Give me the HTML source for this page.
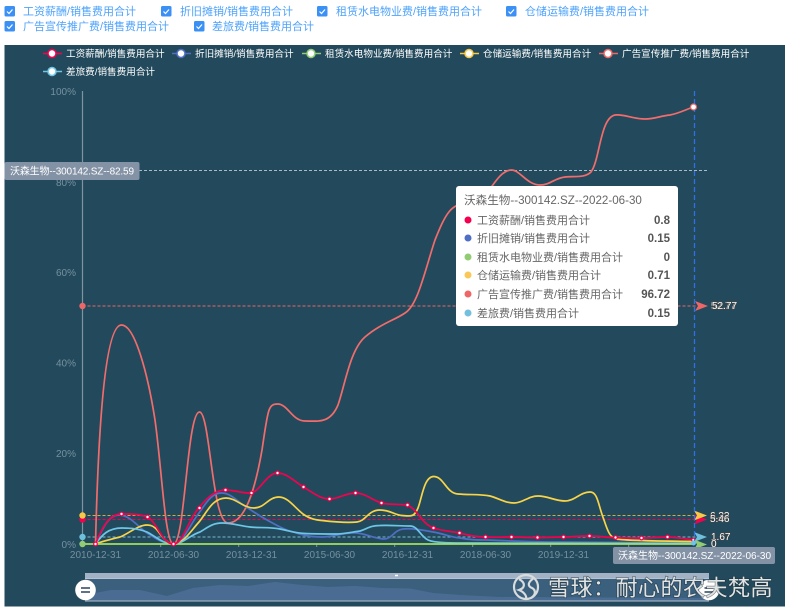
<!DOCTYPE html>
<html>
<head>
<meta charset="utf-8">
<style>
html,body{margin:0;padding:0;background:#fff;width:800px;height:613px;overflow:hidden}
svg{display:block;filter:blur(.3px)}
text{font-family:"Liberation Sans","Noto Sans CJK SC",sans-serif}
.cb{font-size:11px;fill:#4ea3fb}
.lg{font-size:9.6px;fill:#fff}
.ax{font-size:10px;fill:#76909f}
.tt{font-size:11px;fill:#666}
.tv{font-size:11.5px;fill:#555;font-weight:bold;text-anchor:end}
.ml{font-size:10px;fill:#fff;stroke:#444;stroke-width:1.2px;paint-order:stroke}
.s{fill:none;stroke-width:1.7;stroke-linejoin:round;stroke-linecap:round}
</style>
</head>
<body>
<svg width="800" height="613" viewBox="0 0 800 613" xmlns="http://www.w3.org/2000/svg">
<rect width="800" height="613" fill="#fff"/>

<!-- checkboxes -->
<g fill="#3a90f5">
<rect x="4.5" y="6" width="10.5" height="10.5" rx="1.5"/>
<rect x="161" y="6" width="10.5" height="10.5" rx="1.5"/>
<rect x="317" y="6" width="10.5" height="10.5" rx="1.5"/>
<rect x="506" y="6" width="10.5" height="10.5" rx="1.5"/>
<rect x="4.5" y="21" width="10.5" height="10.5" rx="1.5"/>
<rect x="194" y="21" width="10.5" height="10.5" rx="1.5"/>
</g>
<g fill="none" stroke="#fff" stroke-width="1.2">
<path d="M7 11.5l2 2 3.5-4"/>
<path d="M163.500 11.500l2 2 3.500-4"/>
<path d="M319.500 11.500l2 2 3.500-4"/>
<path d="M508.500 11.500l2 2 3.500-4"/>
<path d="M7 26.500l2 2 3.500-4"/>
<path d="M196.500 26.500l2 2 3.500-4"/>
</g>
<text class="cb" x="23" y="15">工资薪酬/销售费用合计</text>
<text class="cb" x="180" y="15">折旧摊销/销售费用合计</text>
<text class="cb" x="336" y="15">租赁水电物业费/销售费用合计</text>
<text class="cb" x="525" y="15">仓储运输费/销售费用合计</text>
<text class="cb" x="23" y="30">广告宣传推广费/销售费用合计</text>
<text class="cb" x="212" y="30">差旅费/销售费用合计</text>

<!-- chart background -->
<rect x="4.500" y="45" width="780.500" height="561.500" fill="#234a5c"/>

<!-- legend -->
<g stroke-width="1.500">
<path d="M43 53.500h19" stroke="#f5004e"/><circle cx="52" cy="53.500" r="4" fill="#fff" stroke="#f5004e"/>
<path d="M172 53.500h19" stroke="#4f6fc4"/><circle cx="181" cy="53.500" r="4" fill="#fff" stroke="#4f6fc4"/>
<path d="M302 53.500h19" stroke="#91cc75"/><circle cx="311" cy="53.500" r="4" fill="#fff" stroke="#91cc75"/>
<path d="M460 53.500h19" stroke="#f9c846"/><circle cx="469" cy="53.500" r="4" fill="#fff" stroke="#f9c846"/>
<path d="M599 53.500h19" stroke="#ee6666"/><circle cx="608" cy="53.500" r="4" fill="#fff" stroke="#ee6666"/>
<path d="M43 71.500h19" stroke="#6ec6e6"/><circle cx="52" cy="71.500" r="4" fill="#fff" stroke="#6ec6e6"/>
</g>
<text class="lg" x="66" y="57">工资薪酬/销售费用合计</text>
<text class="lg" x="195" y="57">折旧摊销/销售费用合计</text>
<text class="lg" x="325" y="57">租赁水电物业费/销售费用合计</text>
<text class="lg" x="483" y="57">仓储运输费/销售费用合计</text>
<text class="lg" x="622" y="57">广告宣传推广费/销售费用合计</text>
<text class="lg" x="66" y="75">差旅费/销售费用合计</text>

<!-- y axis -->
<text class="ax" x="76" y="95" text-anchor="end">100%</text>
<text class="ax" x="76" y="186" text-anchor="end">80%</text>
<text class="ax" x="76" y="276" text-anchor="end">60%</text>
<text class="ax" x="76" y="366.500" text-anchor="end">40%</text>
<text class="ax" x="76" y="457" text-anchor="end">20%</text>
<text class="ax" x="76" y="548" text-anchor="end">0%</text>
<path d="M82.500 91V544" stroke="#7f93a0" stroke-width="1.200"/>

<!-- x axis -->
<path d="M160.700 544v3M238.700 544v3M316.700 544v3M394.700 544v3M472.700 544v3M550.700 544v3M628.700 544v3" stroke="#7f93a0"/>
<g text-anchor="middle">
<text class="ax" x="95.500" y="558">2010-12-31</text>
<text class="ax" x="173.500" y="558">2012-06-30</text>
<text class="ax" x="251.500" y="558">2013-12-31</text>
<text class="ax" x="329.500" y="558">2015-06-30</text>
<text class="ax" x="407.500" y="558">2016-12-31</text>
<text class="ax" x="485.500" y="558">2018-06-30</text>
<text class="ax" x="563.500" y="558">2019-12-31</text>
</g>

<!-- mark lines -->
<g stroke-width="1" stroke-dasharray="3 2" fill="none">
<path d="M82.500 306H696" stroke="#ee6666"/>
<path d="M82.500 515.500H696" stroke="#f9c846" stroke-opacity=".8"/>
<path d="M82.500 519.500H696" stroke="#f5004e"/>
<path d="M82.500 537H696" stroke="#8fd3ea" stroke-opacity=".8"/>
<path d="M139 170.500H708" stroke="#a9bbc6"/>
</g>

<!-- series -->
<path class="s" stroke="#f36c6c" d="M95.500 544C98 440 104 325 121.500 325C135 325 148 375 155 420C162 470 165 544 173.500 544C185 544 187 412 199.500 412C210 412 212 523 228 523C245 523 255 490 262 450C268 410 268 404 277.500 404C288 404 292 421 305 421C318 421 330 424 338 405C345 385 350 350 365 337C380 324 395 320 405 313C418 305 425 270 435 240C445 215 452 200 470 205C485 208 495 170 511.500 170C520 170 527 185 540 185C550 185 555 178 565 177C575 176 585 178 591 172C600 160 600 118 615 115C625 114 632 119 645 119C655 119 660 116 670 115C680 113 687 109 693.500 107"/>
<path class="s" stroke="#4f6fc4" d="M95.500 544C102 530 108 515 119 515C130 515 138 527 147 533C155 538 163 544 173.500 544C183 544 189 526 199 513C206 503 212 493 221 493C230 493 235 499 242 504C252 511 260 516 267 520C276 525 285 530 293 532C302 535 310 537 322 537C333 537 345 532 357 533C367 534 375 539 384 539C392 539 394 530 403 529C412 528 422 530 433 532C445 534 450 537 460 538C470 540 478 540 487 540C510 541 530 542 560 542L693.500 543"/>
<path class="s" stroke="#f9d448" d="M95.500 544C103 541 112 539 120 537C128 534 138 525 147 525C152 525 155 527 158 531C163 538 168 544 173.500 544C183 544 190 532 199 522C206 514 212 498 226 498C236 498 243 508 254 508C265 508 268 497 279 497C288 497 295 508 303 514C310 519 316 520 322 520.500C335 522 348 523 357 522C366 521 368 510 380 510C390 510 395 515 402 515.500C410 516 414 518 418 508C422 498 424 476 434 476.500C444 477 446 493 458 494C470 495 480 494 490 496C498 498 505 503 514 503C523 503 528 496 538 496C548 496 555 501 565 501C575 501 580 492 590 492C598 492 598 505 604 520C608 532 610 537 616 539C630 541 660 541 693.500 541.500"/>
<path class="s" stroke="#6ec6e6" d="M95.500 544C102 535 108 528 122 528C133 528 140 529 147 532C155 536 163 544 173.500 544C183 544 190 535 200 532C207 528 212 523 222 523C232 523 240 526 250 527C260 528 270 527 280 529C290 531 295 533 305 533.500C315 534 325 534 335 534C345 534 352 532 360 531C367 529 370 525.500 380 525.500C390 525 400 526 410 526C418 526 420 536 428 540C435 543 450 543 467 543L693.500 543.500"/>
<path class="s" stroke="#a2e05c" d="M82.500 544H693.500"/>
<path class="s" stroke="#f5004e" stroke-width="2" d="M95.500 544C103 525 110 514 121.500 514C130 514 140 514 147.500 517C157 522 162 544 173.500 544C183 544 188 520 199.500 507C207 498 215 490 225.500 490C235 490 245 494 251.500 493C260 491 267 473 277.500 473C287 473 295 482 303.500 487C312 492 320 499 329.500 499C338 499 346 493 355.500 493C365 493 372 500 381.500 503C390 505 400 504 407.500 505C418 510 422 524 433.500 528C442 531 450 531 459.500 533C468 535 475 537 485.500 537C494 537.500 503 537 511.500 537C520 537 528 537.500 537.500 537.500C546 537.500 555 537 563.500 537C572 537 580 536 589.500 536C598 536 607 537.500 615.500 537.500C624 538 633 538 641.500 538C650 538 659 537 667.500 537C676 537 685 539 693.500 540"/>

<!-- red markers -->
<g fill="#fff" stroke="#f5004e" stroke-width="1.200">
<circle cx="95.500" cy="544" r="1.800"/><circle cx="121.500" cy="514" r="1.800"/><circle cx="147.500" cy="517" r="1.800"/><circle cx="173.500" cy="544" r="1.800"/><circle cx="199.500" cy="508" r="1.800"/><circle cx="225.500" cy="490" r="1.800"/><circle cx="251.500" cy="493" r="1.800"/><circle cx="277.500" cy="473" r="1.800"/><circle cx="303.500" cy="487" r="1.800"/><circle cx="329.500" cy="499" r="1.800"/><circle cx="355.500" cy="493" r="1.800"/><circle cx="381.500" cy="503" r="1.800"/><circle cx="407.500" cy="505" r="1.800"/><circle cx="433.500" cy="528" r="1.800"/><circle cx="459.500" cy="533" r="1.800"/><circle cx="485.500" cy="537" r="1.800"/><circle cx="511.500" cy="537" r="1.800"/><circle cx="537.500" cy="537.500" r="1.800"/><circle cx="563.500" cy="537" r="1.800"/><circle cx="589.500" cy="536" r="1.800"/><circle cx="615.500" cy="537.500" r="1.800"/><circle cx="641.500" cy="538" r="1.800"/><circle cx="667.500" cy="537" r="1.800"/><circle cx="693.500" cy="540" r="1.800"/>
</g>

<!-- left markers -->
<circle cx="82.500" cy="306" r="3.200" fill="#ee6666"/>
<circle cx="82.500" cy="519.500" r="3.200" fill="#f5004e"/>
<circle cx="82.500" cy="515.500" r="3.200" fill="#f9c846"/>
<circle cx="82.500" cy="537" r="3.200" fill="#6ec0dc"/>
<circle cx="82.500" cy="544" r="3.200" fill="#91cc75"/>

<!-- right arrows -->
<path d="M694 514.500l13 5-13 5 3-5z" fill="#f5004e"/>
<path d="M694 510.500l13 5-13 5 3-5z" fill="#f9c846"/>
<path d="M694 532l13 5-13 5 3-5z" fill="#6ec0dc"/>
<path d="M694 539.500l13 5-13 5 3-5z" fill="#91cc75"/>
<path d="M695 301l13 5-13 5 3-5z" fill="#ee6666"/>

<!-- vertical pointer -->
<path d="M694.500 91V546" stroke="#2f6fe8" stroke-width="1.300" stroke-dasharray="5 3"/>
<circle cx="693.500" cy="107" r="3" fill="#fff" stroke="#ee6666" stroke-width="1.200"/>
<circle cx="693.500" cy="543" r="2.500" fill="#6ec6e6"/>

<!-- right labels -->
<text class="ml" x="711" y="309">52.77</text><text class="ml" x="712" y="309">52.77</text>
<text class="ml" x="710" y="519">6.32</text><text class="ml" x="710" y="522">5.46</text>
<text class="ml" x="711" y="540">1.67</text>
<text class="ml" x="711" y="547">0</text>

<!-- left pointer label -->
<rect x="4.500" y="162" width="135" height="18" rx="2" fill="#8392a5"/>
<text x="10" y="174.500" font-size="10" textLength="124" lengthAdjust="spacing" fill="#fff">沃森生物--300142.SZ--82.59</text>

<!-- bottom pointer label -->
<rect x="613" y="547" width="162" height="17" rx="2" fill="#8392a5"/>
<text x="618" y="559" font-size="10" textLength="153" lengthAdjust="spacing" fill="#fff">沃森生物--300142.SZ--2022-06-30</text>

<!-- tooltip -->
<rect x="456" y="186" width="222" height="140" rx="3" fill="#fff"/>
<text x="464" y="204" font-size="11.600" fill="#666">沃森生物--300142.SZ--2022-06-30</text>
<circle cx="468" cy="220" r="3.500" fill="#f5004e"/>
<circle cx="468" cy="238" r="3.500" fill="#4f6fc4"/>
<circle cx="468" cy="257" r="3.500" fill="#91cc75"/>
<circle cx="468" cy="275" r="3.500" fill="#fac858"/>
<circle cx="468" cy="294" r="3.500" fill="#ee6666"/>
<circle cx="468" cy="313" r="3.500" fill="#73c0de"/>
<text class="tt" x="477" y="224">工资薪酬/销售费用合计</text>
<text class="tt" x="477" y="242">折旧摊销/销售费用合计</text>
<text class="tt" x="477" y="261">租赁水电物业费/销售费用合计</text>
<text class="tt" x="477" y="279">仓储运输费/销售费用合计</text>
<text class="tt" x="477" y="298">广告宣传推广费/销售费用合计</text>
<text class="tt" x="477" y="317">差旅费/销售费用合计</text>
<text class="tv" x="670" y="224">0.8</text>
<text class="tv" x="670" y="242">0.15</text>
<text class="tv" x="670" y="261">0</text>
<text class="tv" x="670" y="279">0.71</text>
<text class="tv" x="670" y="298">96.72</text>
<text class="tv" x="670" y="317">0.15</text>

<!-- data zoom -->
<rect x="85" y="573" width="624" height="5.500" fill="#a3b1c4"/>
<rect x="85" y="578.500" width="624" height="22.500" fill="#3b607e"/>
<path d="M85 595L111 590L140 590L167 596L193 588L220 585L248 586L275 582L302 585L328 587L355 586L382 588L410 588.500L433 593L460 595L500 597L709 598V601H85Z" fill="#4a6c92"/>
<path d="M85 578.500H709M85 601H709" stroke="#b4c1d0" stroke-width="1" fill="none"/>
<path d="M395 575.500h3" stroke="#fff" stroke-width="1.500"/>
<circle cx="85.500" cy="590" r="10.300" fill="#fff"/>
<path d="M81 588h9M81 592h9" stroke="#4a5f78" stroke-width="1.700"/>
<circle cx="709" cy="590" r="10.300" fill="#fff"/>
<path d="M704.500 588h9M704.500 592h9" stroke="#4a5f78" stroke-width="1.700"/>

<!-- watermark -->
<g fill="none" stroke="#d8dcdc" stroke-width="2.200">
<circle cx="526" cy="587" r="12"/>
<path d="M519 579C526 583 525 588 519 590C524 592 527 596 526 599M534 578C528 582 527 586 532 588C536 590 536 595 531 598"/>
</g>
<text x="548" y="595.500" font-size="22" letter-spacing="0.500" fill="#e2e4e4" style="paint-order:stroke" stroke="#1d2f38" stroke-opacity=".55" stroke-width="1.500">雪球：耐心的农夫梵高</text>
</svg>
</body>
</html>
